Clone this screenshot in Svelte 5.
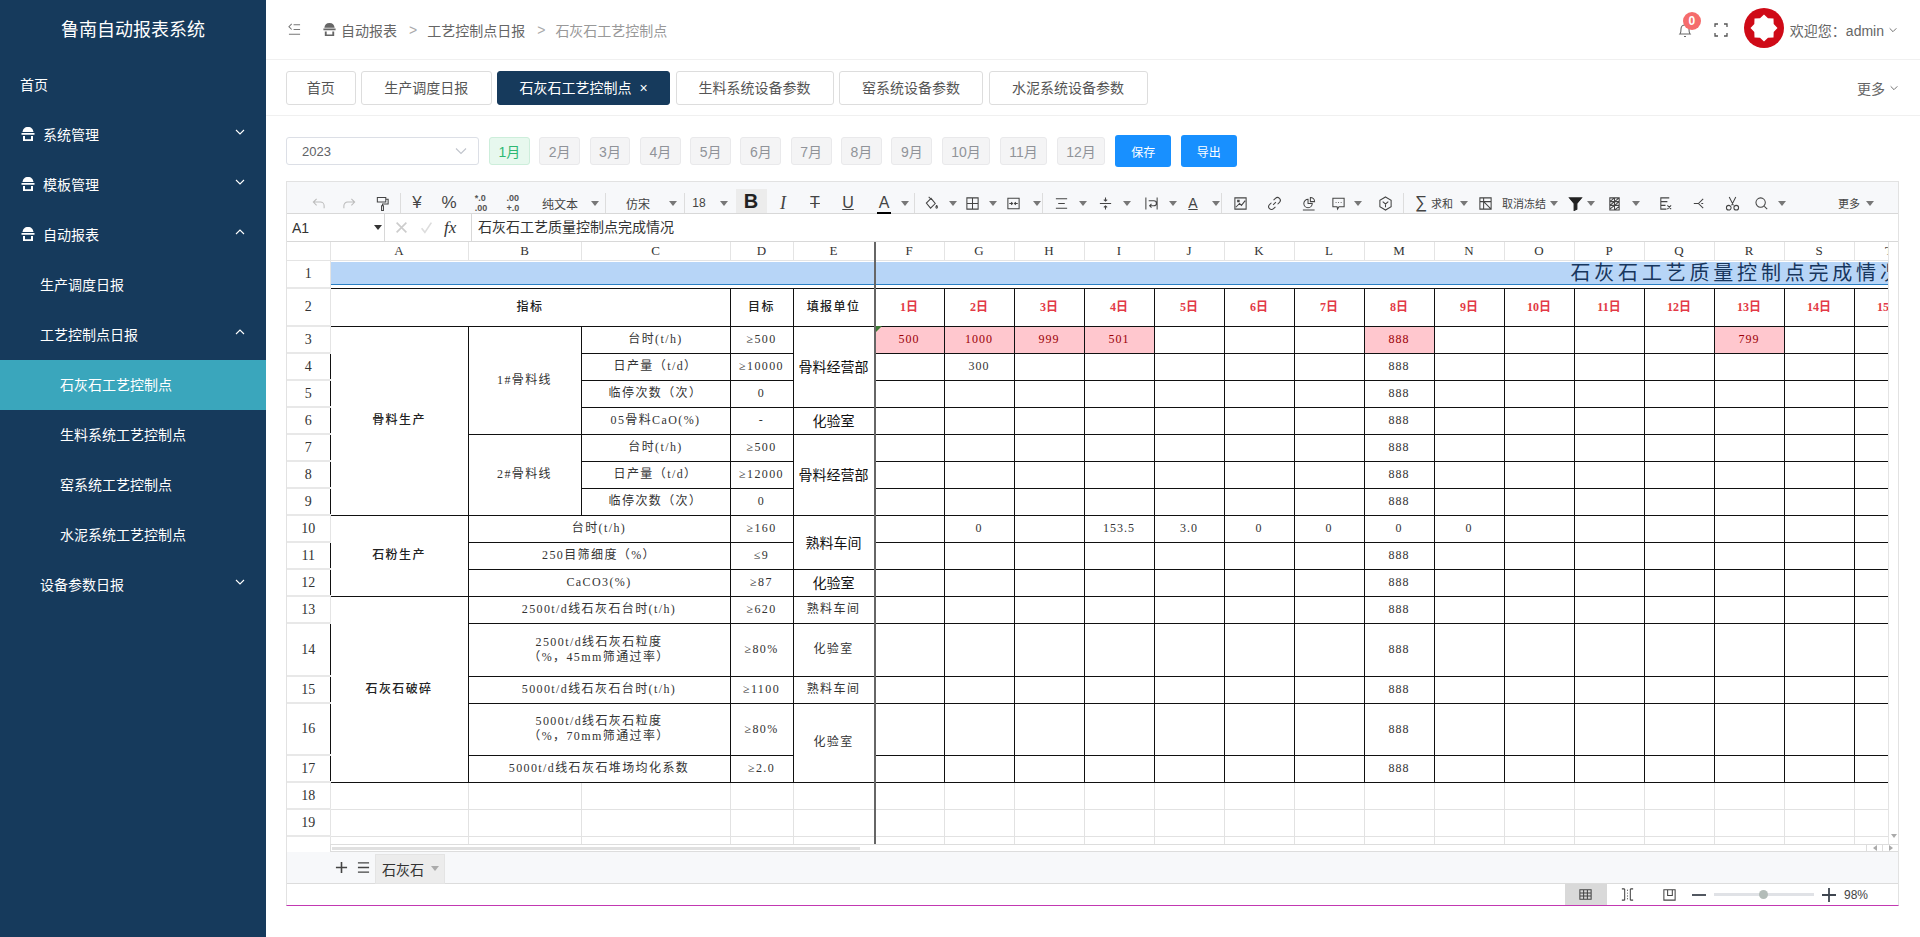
<script>
  const menu = [
    { name: '首页', level: 0 },
    { name: '系统管理', level: 0, icon: true, arrow: 'down' },
    { name: '模板管理', level: 0, icon: true, arrow: 'down' },
    { name: '自动报表', level: 0, icon: true, arrow: 'up' },
    { name: '生产调度日报', level: 1 },
    { name: '工艺控制点日报', level: 1, arrow: 'up' },
    { name: '石灰石工艺控制点', level: 2, active: true },
    { name: '生料系统工艺控制点', level: 2 },
    { name: '窑系统工艺控制点', level: 2 },
    { name: '水泥系统工艺控制点', level: 2 },
    { name: '设备参数日报', level: 1, arrow: 'down' }
  ];

  const tabs = [
    { name: '首页', w: 69.5 },
    { name: '生产调度日报', w: 130.5 },
    { name: '石灰石工艺控制点', w: 173, active: true },
    { name: '生料系统设备参数', w: 158 },
    { name: '窑系统设备参数', w: 144 },
    { name: '水泥系统设备参数', w: 159 }
  ];

  const months = ['1月', '2月', '3月', '4月', '5月', '6月', '7月', '8月', '9月', '10月', '11月', '12月'];

  const shop = 'M8 1C4.500 1 3 3 2.500 6h11C13 3 11.500 1 8 1zM1.500 7h13v1.800h-13zM3 10h2v5H3zM11 10h2v5h-2zM5 13.300h6V15H5z';

  // toolbar icons, 16x16 box
  const icons = {
    undo: 'M6 3L2.5 6.5 6 10M2.5 6.5H10a4 4 0 0 1 4 4V13',
    redo: 'M10 3l3.5 3.5L10 10M13.5 6.5H6a4 4 0 0 0-4 4V13',
    paint: 'M2.5 1.5h9v5h-9zM11.5 3.5H14v5H8v2M7 10.5h2v5H7z',
    bucket: 'M7.5 2.5L2.5 7.5 7 13l5-5zM5 1l3 3M13.5 10c1.2 1.6 1 3 0 3s-1.2-1.4 0-3',
    border: 'M2 2h12v12H2zM2 8h12M8 2v12',
    merge: 'M2 2.5h12v11H2zM3.5 8H7M9 8h3.5M5.5 6.5L7 8 5.5 9.5M10.5 6.5L9 8l1.5 1.5',
    align: 'M2 3h12M4.5 8h7M2 13h12',
    valign: 'M2 8h12M8 1.5v4M6.2 3.8L8 5.5l1.8-1.7M8 14.5v-4M6.2 12.2L8 10.5l1.8 1.7',
    wrap: 'M2 1.5v13M14 1.5v13M5 5h5.5a2.7 2.7 0 0 1 0 5.5H6M8 8.5l-2 2 2 2',
    image: 'M2 2h12v12H2zM3 12l4-4 2 2 4-5M5 4.5h1.5v1.5H5z',
    link: 'M6.5 9.5l3-3M7 4.5l2-2a3 3 0 0 1 4.3 4.3l-2 2M9 11.5l-2 2a3 3 0 0 1-4.3-4.3l2-2',
    chart: 'M7.5 3.5a4.5 4.5 0 1 0 4.5 4.5H7.5zM10 1.5A4.5 4.5 0 0 1 14.5 6H10zM2 15h12.5',
    comment: 'M2 2.5h12v9H8.5L7 14l-.5-2.5H2zM5 7h.8M7.7 7h.8M10.4 7h.8',
    hex: 'M8 1l6 3.5v7L8 15l-6-3.5v-7zM5 6l3 2.5L11 6M8 8.5V12',
    freeze: 'M2 2h12v12H2zM2 6h12M6 2v12M6 6l8 8',
    filter: 'M1.5 2h13L9.5 8v6l-3 1.5V8z',
    pattern: 'M3 2h10v13H3zM3 6h10M3 10h10M8 2v13M3 6l5-4M3 10l10-8M3 14L13 6M8 15l5-4',
    excel: 'M12 2H3v12h6M3 6h7M3 10h5M10 10l4 4M14 10l-4 4',
    share: 'M13 3L8 8l5 5M3 8h5M11 8h2',
    cut: 'M4.5 1L9 10M11.5 1L7 10M6.5 12.5a2.5 2.5 0 1 1-5 0 2.5 2.5 0 1 1 5 0M14.5 12.5a2.5 2.5 0 1 1-5 0 2.5 2.5 0 1 1 5 0',
    search: 'M11 7A5 5 0 1 1 1 7a5 5 0 1 1 10 0M10 11l3 3'
  };

  // c is the centre of each toolbar item on the page
  const rawTools = [
    { c: 318, i: 'undo', dim: true }, { c: 349, i: 'redo', dim: true }, { c: 382, i: 'paint' }, { c: 400, sep: true },
    { c: 417, t: '¥', cls: 'big' }, { c: 449, t: '%', cls: 'big' }, { c: 481, stack: ['*.0', '.00'] }, { c: 513, stack: ['.00', '+.0'] },
    { c: 560, t: '纯文本' }, { c: 595, arrow: true }, { c: 605, sep: true },
    { c: 638, t: '仿宋' }, { c: 673, arrow: true }, { c: 684, sep: true },
    { c: 699, t: '18' }, { c: 724, arrow: true },
    { c: 751, t: 'B', cls: 'bold on' }, { c: 783, t: 'I', cls: 'ital' }, { c: 815, t: 'T', cls: 'strike' }, { c: 848, t: 'U', cls: 'under' },
    { c: 884, t: 'A', cls: 'color' }, { c: 905, arrow: true }, { c: 914, sep: true },
    { c: 931, i: 'bucket' }, { c: 953, arrow: true }, { c: 972, i: 'border' }, { c: 993, arrow: true },
    { c: 1013, i: 'merge' }, { c: 1037, arrow: true }, { c: 1042, sep: true },
    { c: 1061, i: 'align' }, { c: 1083, arrow: true }, { c: 1105, i: 'valign' }, { c: 1127, arrow: true },
    { c: 1151, i: 'wrap' }, { c: 1173, arrow: true }, { c: 1193, t: 'A', cls: 'under thin' }, { c: 1216, arrow: true }, { c: 1221, sep: true },
    { c: 1240, i: 'image' }, { c: 1274, i: 'link' }, { c: 1308, i: 'chart' }, { c: 1338, i: 'comment' }, { c: 1358, arrow: true },
    { c: 1385, i: 'hex' }, { c: 1403, sep: true },
    { c: 1421, t: '∑', cls: 'big' }, { c: 1442, t: '求和', cls: 'small' }, { c: 1464, arrow: true },
    { c: 1485, i: 'freeze' }, { c: 1524, t: '取消冻结', cls: 'small' }, { c: 1554, arrow: true },
    { c: 1575, i: 'filter', solid: true }, { c: 1591, arrow: true }, { c: 1614, i: 'pattern' }, { c: 1636, arrow: true },
    { c: 1665, i: 'excel' }, { c: 1698, i: 'share' }, { c: 1732, i: 'cut' }, { c: 1762, i: 'search' }, { c: 1782, arrow: true },
    { c: 1849, t: '更多', cls: 'small' }, { c: 1870, arrow: true }
  ];
  let right = 287;
  const tools = rawTools.map((tool) => {
    const w = tool.sep ? 1 : tool.arrow ? 8 : 16;
    const gap = tool.c - w / 2 - right;
    right = tool.c + w / 2;
    return { ...tool, w, gap };
  });

  const letters = 'ABCDEFGHIJKLMNOPQRST'.split('');
  const widths = [138, 113, 149, 63, 81, ...Array(15).fill(70)];
  const days = Array.from({ length: 15 }, (_, n) => n);

  // left hand part of the sheet, frozen columns
  const rows = [
    { n: 3, h: 27, cells: [
      { t: '骨料生产', rs: 7, cls: 'bold' }, { t: '1#骨料线', rs: 4 }, { t: '台时(t/h)' }, { t: '≥500' },
      { t: '骨料经营部', rs: 3, cls: 'unit' }] },
    { n: 4, h: 27, cells: [{ t: '日产量（t/d）' }, { t: '≥10000' }] },
    { n: 5, h: 27, cells: [{ t: '临停次数（次）' }, { t: '0' }] },
    { n: 6, h: 27, cells: [{ t: '05骨料CaO(%)' }, { t: '-' }, { t: '化验室', cls: 'unit' }] },
    { n: 7, h: 27, cells: [
      { t: '2#骨料线', rs: 3 }, { t: '台时(t/h)' }, { t: '≥500' }, { t: '骨料经营部', rs: 3, cls: 'unit' }] },
    { n: 8, h: 27, cells: [{ t: '日产量（t/d）' }, { t: '≥12000' }] },
    { n: 9, h: 27, cells: [{ t: '临停次数（次）' }, { t: '0' }] },
    { n: 10, h: 27, cells: [
      { t: '石粉生产', rs: 3, cls: 'bold' }, { t: '台时(t/h)', cs: 2 }, { t: '≥160' }, { t: '熟料车间', rs: 2, cls: 'unit' }] },
    { n: 11, h: 27, cells: [{ t: '250目筛细度（%）', cs: 2 }, { t: '≤9' }] },
    { n: 12, h: 27, cells: [{ t: 'CaCO3(%)', cs: 2 }, { t: '≥87' }, { t: '化验室', cls: 'unit' }] },
    { n: 13, h: 27, cells: [
      { t: '石灰石破碎', rs: 5, cls: 'bold' }, { t: '2500t/d线石灰石台时(t/h)', cs: 2 }, { t: '≥620' }, { t: '熟料车间' }] },
    { n: 14, h: 53, cells: [{ t: '2500t/d线石灰石粒度\n（%，45mm筛通过率）', cs: 2 }, { t: '≥80%' }, { t: '化验室' }] },
    { n: 15, h: 27, cells: [{ t: '5000t/d线石灰石台时(t/h)', cs: 2 }, { t: '≥1100' }, { t: '熟料车间' }] },
    { n: 16, h: 52, cells: [{ t: '5000t/d线石灰石粒度\n（%，70mm筛通过率）', cs: 2 }, { t: '≥80%' }, { t: '化验室', rs: 2 }] },
    { n: 17, h: 27, cells: [{ t: '5000t/d线石灰石堆场均化系数', cs: 2 }, { t: '≥2.0' }] }
  ];

  const values = {
    3: { 0: '500', 1: '1000', 2: '999', 3: '501', 7: '888', 12: '799' },
    4: { 1: '300', 7: '888' },
    10: { 1: '0', 3: '153.5', 4: '3.0', 5: '0', 6: '0', 7: '0', 8: '0' }
  };
  function cellValue(row, day) {
    if (values[row]) return values[row][day] ?? '';
    return day === 7 ? '888' : '';
  }
</script>

<div class="layout">
  <aside class="sidebar">
    <div class="logo">鲁南自动报表系统</div>
    {#each menu as item}
      <div class="menu-item level-{item.level}" class:active={item.active}>
        {#if item.icon}
          <svg class="menu-icon" viewBox="0 0 16 16"><path d={shop} /></svg>
        {/if}
        <span>{item.name}</span>
        {#if item.arrow}
          <svg class="menu-arrow" viewBox="0 0 12 12"><path d={item.arrow === 'up' ? 'M2 8l4-4 4 4' : 'M2 4l4 4 4-4'} /></svg>
        {/if}
      </div>
    {/each}
  </aside>

  <main class="main">
    <header class="topbar">
      <svg class="fold" viewBox="0 0 14 14"><path d="M6 2h7M6 7h7M1 12h12M4 1L1 4l3 3" /></svg>
      <nav class="crumbs">
        <svg class="crumb-icon" viewBox="0 0 16 16"><path d={shop} /></svg>
        <span>自动报表</span><i>&gt;</i><span>工艺控制点日报</span><i>&gt;</i><span class="last">石灰石工艺控制点</span>
      </nav>
      <div class="user">
        <div class="bell">
          <svg viewBox="0 0 16 16"><path d="M3 12c1-1 1-2 1-5 0-2.500 1.500-4 4-4s4 1.500 4 4c0 3 0 4 1 5zM7 14.500h2" /></svg>
          <b>0</b>
        </div>
        <svg class="full" viewBox="0 0 14 14"><path d="M1 4V1h3M10 1h3v3M13 10v3h-3M4 13H1v-3" /></svg>
        <div class="avatar">
          <svg viewBox="0 0 40 40"><path d="M20 6.500L24 10.300 29.500 10.500 29.700 16 33.500 20 29.700 24 29.500 29.500 24 29.700 20 33.500 16 29.700 10.500 29.500 10.300 24 6.500 20 10.300 16 10.500 10.500 16 10.300z" /></svg>
        </div>
        <span class="welcome">欢迎您：admin</span>
        <svg class="chev" viewBox="0 0 12 12"><path d="M2 4l4 4 4-4" /></svg>
      </div>
    </header>

    <div class="tabbar">
      {#each tabs as tab}
        <div class="tab" class:on={tab.active} style="width:{tab.w}px">
          {tab.name}{#if tab.active}<span class="close">×</span>{/if}
        </div>
      {/each}
      <div class="more">更多<svg class="chev" viewBox="0 0 12 12"><path d="M2 4l4 4 4-4" /></svg></div>
    </div>

    <section class="content">
      <div class="filters">
        <div class="year">
          <span>2023</span>
          <svg class="chev" viewBox="0 0 12 12"><path d="M1 3.500l5 5 5-5" /></svg>
        </div>
        {#each months as m, n}
          <button class="month" class:current={n === 0}>{m}</button>
        {/each}
        <button class="primary first">保存</button>
        <button class="primary">导出</button>
      </div>

      <div class="sheet">
        <div class="toolbar">
          {#each tools as tool}
            <div class="tool {tool.cls ?? ''}" class:dim={tool.dim} style="width:{tool.w}px;margin-left:{tool.gap}px">
              {#if tool.sep}
                <span class="sep"></span>
              {:else if tool.arrow}
                <span class="caret"></span>
              {:else if tool.i}
                <svg viewBox="0 0 16 16" class:solid={tool.solid}><path d={icons[tool.i]} /></svg>
              {:else if tool.stack}
                <span class="stack"><span>{tool.stack[0]}</span><span>{tool.stack[1]}</span></span>
              {:else}
                <span>{tool.t}</span>
              {/if}
            </div>
          {/each}
        </div>

        <div class="formula">
          <div class="name-box"><span>A1</span><span class="caret dark"></span></div>
          <div class="fx">
            <svg viewBox="0 0 16 16" class="x"><path d="M2 2l12 12M14 2L2 14" /></svg>
            <svg viewBox="0 0 16 16" class="ok"><path d="M2 9l4 5 8-12" /></svg>
            <em>fx</em>
          </div>
          <div class="formula-text">石灰石工艺质量控制点完成情况</div>
        </div>

        <div class="grid-row">
          <div class="grid-wrap">
            <table class="grid">
              <colgroup>
                <col class="head-col" />
                {#each widths as w}<col style="width:{w}px" />{/each}
              </colgroup>
              <thead>
                <tr class="letters">
                  <th class="corner"></th>
                  {#each letters as l}<th>{l}</th>{/each}
                </tr>
              </thead>
              <tbody>
                <tr style="height:28px">
                  <th class="num">1</th>
                  <td class="banner" colspan="20">
                    <div class="banner-fill">石灰石工艺质量控制点完成情况</div>
                  </td>
                </tr>
                <tr style="height:38px">
                  <th class="num">2</th>
                  <td colspan="3" class="line bold">指标</td>
                  <td class="line bold">目标</td>
                  <td class="line bold">填报单位</td>
                  {#each days as d}<td class="line day">{d + 1}日</td>{/each}
                </tr>
                {#each rows as row}
                  <tr style="height:{row.h}px">
                    <th class="num">{row.n}</th>
                    {#each row.cells as cell}
                      <td class="line {cell.cls ?? ''}" rowspan={cell.rs ?? 1} colspan={cell.cs ?? 1}>{cell.t}</td>
                    {/each}
                    {#each days as d}
                      {@const v = cellValue(row.n, d)}
                      <td class="line val" class:bad={row.n === 3 && v}>{v}</td>
                    {/each}
                  </tr>
                {/each}
                {#each [18, 19, 20] as n}
                  <tr style="height:27px">
                    <th class="num">{n === 20 ? '' : n}</th>
                    {#each letters as l}<td></td>{/each}
                  </tr>
                {/each}
              </tbody>
            </table>
            <div class="freeze-line"></div>
            <span class="flag"></span>
          </div>
          <div class="v-scroll"><span class="caret small-caret"></span></div>
        </div>

        <div class="h-scroll">
          <span class="thumb"></span>
          <span class="h-end"><span class="mini left"></span></span>
          <span class="h-end"><span class="mini"></span></span>
        </div>

        <div class="sheet-tabs">
          <svg class="plus" viewBox="0 0 14 14"><path d="M7 1v12M1 7h12" /></svg>
          <svg class="list" viewBox="0 0 14 14"><path d="M1 2h12M1 7h12M1 12h12" /></svg>
          <div class="sheet-tab">石灰石<span class="caret"></span></div>
        </div>

        <div class="status">
          <div class="view on"><svg viewBox="0 0 16 16"><path d="M2 3h12v10H2zM2 6.300h12M2 9.600h12M6 3v10M10 3v10" /></svg></div>
          <div class="view"><svg viewBox="0 0 16 16"><path d="M5 2H2M5 14H2M5 2v12M11 2h3M11 14h3M11 2v12M8 3v1M8 6v1M8 9v1M8 12v1" /></svg></div>
          <div class="view"><svg viewBox="0 0 16 16"><path d="M2 3h12v11H2zM6 3v6h5V3" /></svg></div>
          <svg class="zoom-btn" viewBox="0 0 14 14"><path d="M0 7h14" /></svg>
          <div class="slider"><span></span></div>
          <svg class="zoom-btn" viewBox="0 0 14 14"><path d="M7 0v14M0 7h14" /></svg>
          <span class="pct">98%</span>
        </div>
      </div>
    </section>
  </main>
</div>

<style>
  :global(body) {
    margin: 0;
    overflow: hidden;
    font-family: "Liberation Sans", "Noto Sans CJK SC", sans-serif;
  }
  svg {
    fill: none;
    stroke: currentColor;
    stroke-width: 1.1;
  }
  .layout {
    display: flex;
    height: 937px;
    background: #fff;
  }

  .sidebar {
    width: 266px;
    flex: none;
    background: #163a5c;
    color: #fff;
    font-size: 14px;
  }
  .logo {
    height: 60px;
    line-height: 60px;
    text-align: center;
    font-size: 18px;
  }
  .menu-item {
    display: flex;
    align-items: center;
    height: 50px;
    box-sizing: border-box;
    padding-right: 20px;
    padding-bottom: 2px;
  }
  .level-0 { padding-left: 20px; }
  .level-1 { padding-left: 40px; }
  .level-2 { padding-left: 60px; }
  .menu-item.active { background: #3aa6bc; }
  .menu-icon {
    width: 16px;
    height: 16px;
    margin-right: 7px;
    fill: #fff;
    stroke: none;
  }
  .menu-arrow {
    width: 12px;
    height: 12px;
    margin-left: auto;
    margin-bottom: 4px;
  }

  .main {
    flex: 1;
    min-width: 0;
    display: flex;
    flex-direction: column;
  }
  .topbar {
    height: 60px;
    flex: none;
    display: flex;
    align-items: center;
    padding: 0 22px 0 22px;
    border-bottom: 1px solid #f0f0f0;
    box-sizing: border-box;
    color: #666;
  }
  .fold { width: 13px; height: 13px; margin-right: 21px; color: #777; }
  .crumbs {
    display: flex;
    align-items: center;
    font-size: 14px;
    color: #666;
  }
  .crumb-icon { width: 15px; height: 15px; margin-right: 4px; fill: #666; stroke: none; }
  .crumbs i { font-style: normal; color: #aaa; margin: 0 10px 0 12px; font-size: 14px; }
  .crumbs .last { color: #999; }
  .user {
    margin-left: auto;
    display: flex;
    align-items: center;
    font-size: 14px;
    color: #666;
  }
  .bell { position: relative; width: 16px; height: 16px; margin-right: 21px; }
  .bell svg { width: 16px; height: 16px; }
  .bell b {
    position: absolute;
    left: 6px;
    top: -10px;
    width: 18px;
    height: 18px;
    border-radius: 50%;
    background: #f56c6c;
    color: #fff;
    font-size: 12px;
    line-height: 18px;
    text-align: center;
  }
  .full { width: 14px; height: 14px; margin-right: 16px; color: #555; stroke-width: 1.3; }
  .avatar {
    width: 40px;
    height: 40px;
    border-radius: 50%;
    background: #cf0a17;
    margin: -4px 6px 0 0;
  }
  .avatar svg { width: 40px; height: 40px; fill: #fff; stroke: none; display: block; }
  .chev { width: 10px; height: 10px; margin-left: 4px; color: #666; }

  .tabbar {
    height: 56px;
    flex: none;
    display: flex;
    align-items: center;
    gap: 5.500px;
    padding: 0 21px 0 20px;
    box-sizing: border-box;
    border-bottom: 1px solid #f0f0f0;
    font-size: 14px;
    color: #555;
  }
  .tab {
    height: 34px;
    box-sizing: border-box;
    border: 1px solid #ddd;
    border-radius: 3px;
    text-align: center;
    line-height: 32px;
  }
  .tab.on {
    background: #163a5c;
    border-color: #163a5c;
    color: #fff;
  }
  .close { margin-left: 8px; font-size: 14px; }
  .more {
    margin-left: auto;
    display: flex;
    align-items: center;
    color: #666;
  }

  .content {
    flex: 1;
    min-height: 0;
    padding: 19px 21px 0 20px;
  }
  .filters {
    display: flex;
    align-items: center;
    gap: 9.500px;
    height: 32px;
  }
  .year {
    width: 193px;
    height: 28px;
    box-sizing: border-box;
    border: 1px solid #dcdfe6;
    border-radius: 3px;
    display: flex;
    align-items: center;
    justify-content: space-between;
    padding: 0 11px 0 15px;
    margin-right: .500px;
    font-size: 13px;
    color: #606266;
  }
  .year .chev { width: 12px; height: 12px; color: #c0c4cc; }
  .month {
    height: 28px;
    padding: 0 8.500px;
    box-sizing: border-box;
    border: 1px solid #e9e9eb;
    border-radius: 3px;
    background: #f4f4f5;
    color: #909399;
    font: 14px "Liberation Sans", "Noto Sans CJK SC", sans-serif;
  }
  .month.current {
    background: #e7f8ee;
    border-color: #cdeedb;
    color: #2eb872;
  }
  .primary {
    width: 56px;
    height: 32px;
    border: 0;
    border-radius: 3px;
    background: #1890ff;
    color: #fff;
    font: 12px "Liberation Sans", "Noto Sans CJK SC", sans-serif;
  }
  .primary.first { margin-left: .500px; }

  .sheet {
    margin-top: 14px;
    height: 725px;
    box-sizing: border-box;
    border: 1px solid #e2e2e2;
    border-bottom: 1px solid #c238b2;
    display: flex;
    flex-direction: column;
    overflow: hidden;
  }
  .toolbar {
    height: 32px;
    flex: none;
    display: flex;
    align-items: flex-end;
    background: #f7f8fa;
    border-bottom: 1px solid #d8d8d8;
    box-sizing: border-box;
    color: #444;
    font-size: 12px;
  }
  .tool {
    flex: none;
    height: 20px;
    display: flex;
    align-items: center;
    justify-content: center;
    white-space: nowrap;
  }
  .tool > * { flex: none; }
  .tool svg { width: 15px; height: 15px; }
  .tool svg.solid { fill: #222; stroke: #222; }
  .tool.dim { color: #bbb; }
  .sep { width: 1px; height: 20px; background: #ddd; }
  .caret {
    width: 0;
    height: 0;
    border-left: 4px solid transparent;
    border-right: 4px solid transparent;
    border-top: 5px solid #777;
  }
  .big { font-size: 17px; }
  .small { font-size: 11px; }
  .tool.bold { font-size: 20px; font-weight: 700; color: #222; }
  .tool.on span {
    background: #ececec;
    width: 31px;
    height: 24px;
    margin-top: -4px;
    line-height: 24px;
    text-align: center;
  }
  .ital { font: italic 18px "Liberation Serif", serif; }
  .strike { font-size: 16px; text-decoration: line-through; }
  .under { font-size: 16px; text-decoration: underline; }
  .color { font-size: 16px; }
  .color span { width: 14px; height: 19px; line-height: 19px; text-align: center; border-bottom: 2px solid #000; margin-top: 0; }
  .thin { font-size: 14px; text-decoration: underline; }
  .stack {
    display: flex;
    flex-direction: column;
    font-size: 9px;
    line-height: 10px;
    font-weight: 700;
    color: #555;
  }

  .formula {
    height: 28px;
    flex: none;
    display: flex;
    background: #fff;
    border-bottom: 1px solid #d8d8d8;
    box-sizing: border-box;
    font-size: 14px;
    color: #333;
  }
  .name-box {
    width: 98px;
    display: flex;
    align-items: center;
    justify-content: space-between;
    padding: 0 2px 0 5px;
    box-sizing: border-box;
    border-right: 1px solid #d8d8d8;
  }
  .caret.dark { border-top-color: #333; }
  .fx {
    width: 87px;
    display: flex;
    align-items: center;
    gap: 12px;
    padding-left: 10px;
    box-sizing: border-box;
    border-right: 1px solid #d8d8d8;
  }
  .fx svg { width: 13px; height: 13px; flex: none; stroke-width: 2; }
  .fx .x { color: #ccc; }
  .fx .ok { color: #ddd; }
  .fx em { font: italic 17px "Liberation Serif", serif; color: #333; margin-left: -1px; }
  .formula-text { padding-left: 6px; line-height: 26px; }

  .grid-row {
    display: flex;
    height: 602px;
    flex: none;
  }
  .grid-wrap {
    position: relative;
    flex: 1;
    min-width: 0;
    overflow: hidden;
  }
  .grid {
    table-layout: fixed;
    width: 1637px;
    border-collapse: collapse;
    font-family: "Liberation Serif", "Noto Sans CJK SC", serif;
    font-size: 12px;
    color: #333;
  }
  .head-col { width: 43px; }
  .letters { height: 18px; }
  .letters th {
    font-weight: 400;
    font-size: 13px;
    padding: 0;
    color: #333;
    border: 1px solid #e4e4e4;
    border-top: 0;
  }
  .corner { border-left: 0 !important; }
  .num {
    font-weight: 400;
    font-size: 14px;
    padding: 0;
    background: #fff;
    border-bottom: 2px solid #e8e8e8;
    border-right: 1px solid #e4e4e4;
    color: #333;
  }
  td {
    padding: 0;
    text-align: center;
    white-space: pre-line;
    line-height: 15px;
    letter-spacing: 1.400px;
    border: 1px solid #e2e2e2;
    overflow: hidden;
  }
  .banner {
    border: 0;
    vertical-align: top;
    text-align: left;
    white-space: nowrap;
  }
  .banner-fill {
    height: 22px;
    margin: 1px 0 2px;
    background: #b7d5f7;
    border-bottom: 1px solid #2a7fc4;
    padding-left: 1240px;
    font-size: 20px;
    line-height: 22px;
    letter-spacing: 3.800px;
    color: #17365d;
  }
  .line { border: 1px solid #111; }
  td.bold { font-weight: 500; color: #222; }
  td.unit { font-size: 14px; color: #111; letter-spacing: 0; font-family: "Noto Sans CJK SC", sans-serif; }
  .day { color: #e23a46; font-weight: 700; letter-spacing: 0; }
  .val { letter-spacing: 1px; font-size: 12px; }
  .bad { background: #ffc7ce; color: #9c0006; }
  .freeze-line {
    position: absolute;
    left: 587px;
    top: 0;
    bottom: 0;
    width: 2px;
    background: #666;
  }
  .flag {
    position: absolute;
    left: 589px;
    top: 84px;
    border-top: 6px solid #3d7a35;
    border-right: 6px solid transparent;
  }
  .v-scroll {
    width: 10px;
    flex: none;
    box-sizing: border-box;
    border-left: 1px solid #e4e4e4;
    display: flex;
    align-items: flex-end;
    justify-content: center;
    padding-bottom: 6px;
  }
  .small-caret {
    border-left-width: 3px;
    border-right-width: 3px;
    border-top-width: 4px;
    border-top-color: #aaa;
  }

  .h-scroll {
    height: 8px;
    flex: none;
    margin-left: 43px;
    position: relative;
    display: flex;
    justify-content: flex-end;
    border: 1px solid #ddd;
    border-right: 0;
    box-sizing: border-box;
  }
  .thumb {
    position: absolute;
    left: 1px;
    top: 2px;
    width: 528px;
    height: 3px;
    background: #e0e0e0;
  }
  .h-end {
    width: 15px;
    border-left: 1px solid #ddd;
    display: flex;
    align-items: center;
    justify-content: center;
  }
  .mini {
    border-top: 3px solid transparent;
    border-bottom: 3px solid transparent;
    border-left: 4px solid #aaa;
  }
  .mini.left { transform: scaleX(-1); }
  .sheet-tabs {
    height: 32px;
    flex: none;
    display: flex;
    align-items: center;
    padding-left: 48px;
    background: #f7f8fa;
    border-bottom: 1px solid #dcdcdc;
    box-sizing: border-box;
    font-size: 14px;
    color: #333;
  }
  .plus, .list { width: 13px; height: 13px; stroke-width: 1.700; color: #444; }
  .list { margin-left: 9px; stroke-width: 1.400; }
  .sheet-tab {
    height: 30px;
    width: 70px;
    margin: 2px 0 0 5px;
    box-sizing: border-box;
    background: #ececec;
    border: 1px solid #e4e4e4;
    display: flex;
    align-items: center;
    justify-content: space-between;
    padding: 0 5px 0 6px;
  }
  .sheet-tab .caret { border-top-color: #aaa; }
  .status {
    flex: 1;
    display: flex;
    align-items: center;
    justify-content: flex-end;
    padding-right: 30px;
    color: #444;
  }
  .view {
    width: 42px;
    height: 100%;
    display: flex;
    align-items: center;
    justify-content: center;
  }
  .view.on { background: #d9d9d9; }
  .view svg { width: 15px; height: 15px; }
  .zoom-btn { width: 14px; height: 14px; stroke-width: 1.800; color: #3f4650; }
  .view + .zoom-btn { margin-left: 1px; }
  .slider {
    width: 100px;
    height: 3px;
    margin: 0 8px;
    background: #e0e2e6;
    position: relative;
  }
  .slider span {
    position: absolute;
    left: 45px;
    top: -3px;
    width: 9px;
    height: 9px;
    border-radius: 50%;
    background: #b3bcb8;
  }
  .pct { font-size: 12px; margin-left: 8px; color: #444; }
</style>
